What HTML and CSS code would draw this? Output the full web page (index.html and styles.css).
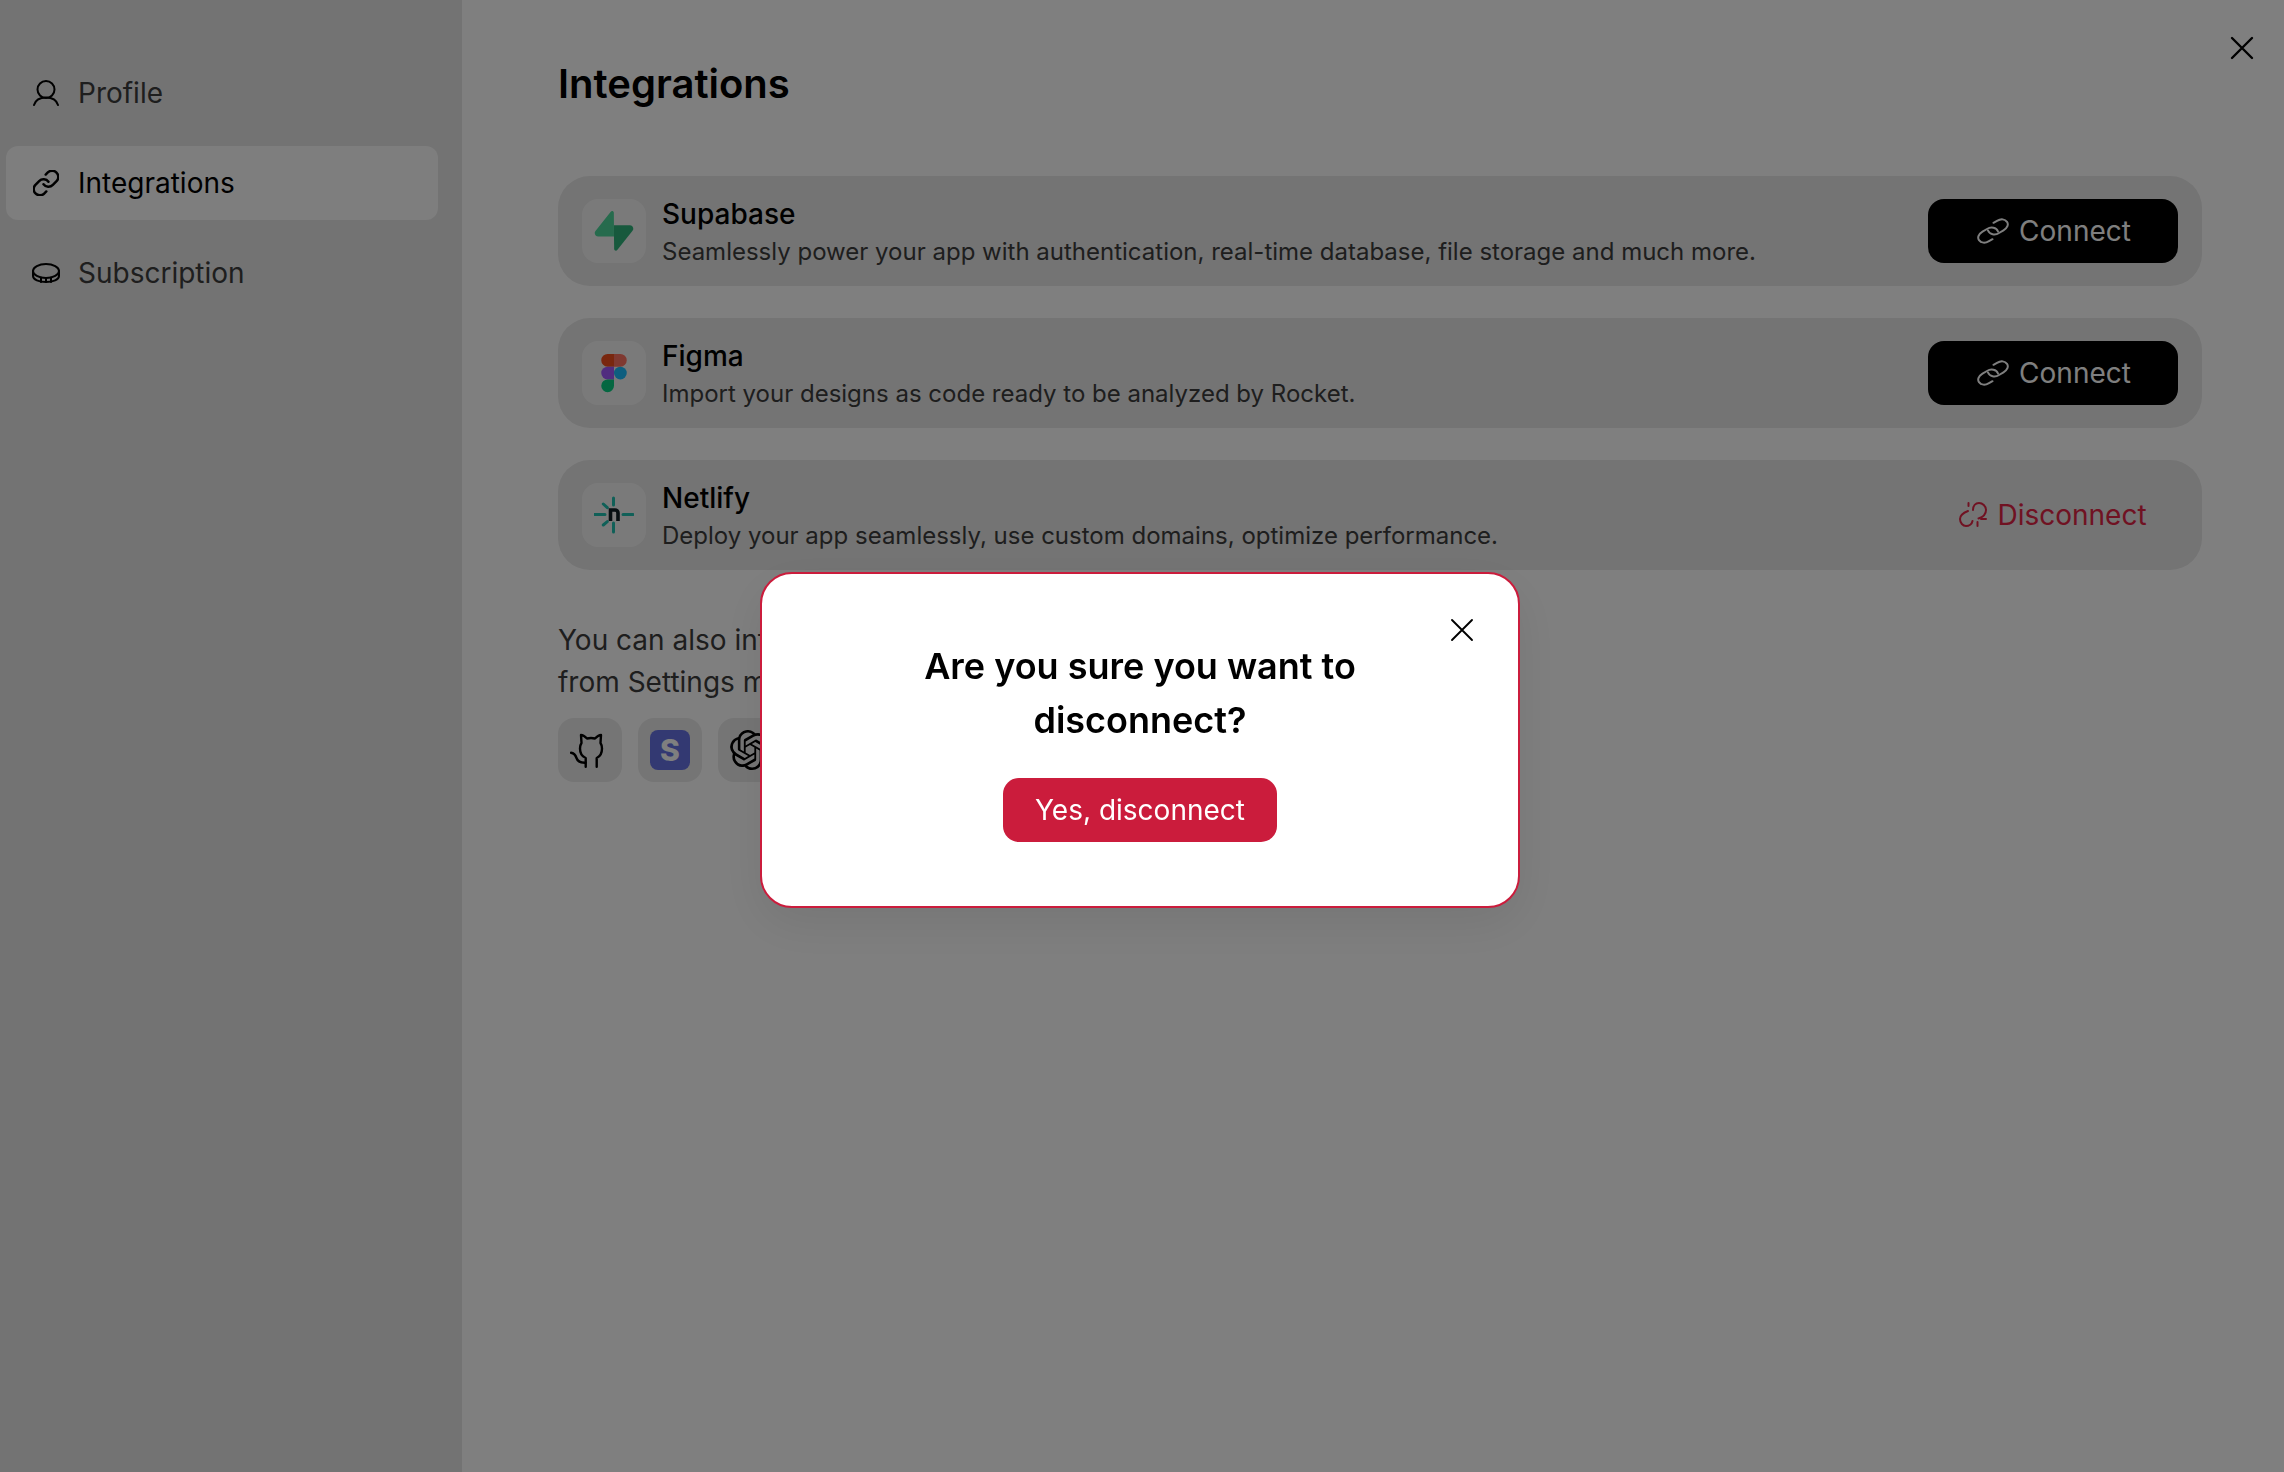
FILE: index.html
```html
<!DOCTYPE html>
<html lang="en">
<head>
<meta charset="utf-8">
<title>Integrations</title>
<link rel="stylesheet" href="styles.css">
</head>
<body>
<div class="app">
  <aside class="sidebar">
    <a class="nav-item">
      <svg class="nav-icon" viewBox="0 0 26 26"><circle cx="13" cy="9.500" r="8.500"/><path d="M1 25c1.500-5 6-7.500 12-7.500S23.500 20 25 25"/></svg>
      <span>Profile</span>
    </a>
    <a class="nav-item active">
      <svg class="nav-icon" viewBox="1.500 1.500 21 21"><path d="M10 13a5 5 0 0 0 7.540.540l3-3a5 5 0 0 0-7.070-7.070l-1.720 1.710"/><path d="M14 11a5 5 0 0 0-7.540-.540l-3 3a5 5 0 0 0 7.070 7.070l1.710-1.710"/></svg>
      <span>Integrations</span>
    </a>
    <a class="nav-item">
      <svg class="nav-icon nav-icon-wide" viewBox="0 0 28 20"><ellipse cx="14" cy="8" rx="13" ry="7"/><path d="M1 8v5c0 3.500 6 6 13 6s13-2.500 13-6V8"/><path d="M9 14.500V19M14 15v4M19 14.500V19"/></svg>
      <span>Subscription</span>
    </a>
  </aside>
  <main class="main">
    <button class="page-close" aria-label="Close">
      <svg class="x-icon" viewBox="0 0 24 24"><path d="M2 2l20 20M22 2 2 22"/></svg>
    </button>
    <h1 class="title">Integrations</h1>
    <section class="cards">
      <article class="card">
        <div class="logo-box">
          <svg class="logo" viewBox="0 0 109 113"><path class="supa-dark" d="M63.708 110.284c-2.860 3.601-8.658 1.628-8.727-2.970l-1.007-67.251h45.220c8.190 0 12.758 9.460 7.665 15.875l-43.151 54.346Z"/><path class="supa-light" d="M45.317 2.071c2.860-3.601 8.657-1.628 8.726 2.970l.442 67.251H9.831c-8.190 0-12.759-9.460-7.665-15.875L45.317 2.071Z"/></svg>
        </div>
        <div class="card-text">
          <h2 class="card-name">Supabase</h2>
          <p class="card-desc">Seamlessly power your app with authentication, real-time database, file storage and much more.</p>
        </div>
        <button class="btn-connect">
          <svg class="btn-icon" viewBox="0 0 32 28"><path d="M11 13.500C12.500 17.500 18 18.500 22 16l4.500-2.700C30.500 10.800 31.800 7.500 30 4.800 28 2 24 1.500 20 3.800l-3.500 2"/><path d="M21 14.500C19.500 10.500 14 9.500 10 12l-4.500 2.700C1.500 17.200.200 20.500 2 23.200 4 26 8 26.500 12 24.200l3.500-2"/></svg>
          <span>Connect</span>
        </button>
      </article>
      <article class="card">
        <div class="logo-box">
          <svg class="logo" viewBox="0 0 28 42"><path fill="#f24e1e" d="M14 1H7.300a6.700 6.700 0 0 0 0 13.400H14z"/><path fill="#ff7262" d="M14 1h6.700a6.700 6.700 0 0 1 0 13.400H14z"/><path fill="#a259ff" d="M14 14.400H7.300a6.700 6.700 0 0 0 0 13.400H14z"/><circle fill="#1abcfe" cx="20.700" cy="21.100" r="6.700"/><path fill="#0acf83" d="M7.300 27.800H14v6.700a6.700 6.700 0 1 1-6.700-6.700z"/></svg>
        </div>
        <div class="card-text">
          <h2 class="card-name">Figma</h2>
          <p class="card-desc">Import your designs as code ready to be analyzed by Rocket.</p>
        </div>
        <button class="btn-connect">
          <svg class="btn-icon" viewBox="0 0 32 28"><path d="M11 13.500C12.500 17.500 18 18.500 22 16l4.500-2.700C30.500 10.800 31.800 7.500 30 4.800 28 2 24 1.500 20 3.800l-3.500 2"/><path d="M21 14.500C19.500 10.500 14 9.500 10 12l-4.500 2.700C1.500 17.200.200 20.500 2 23.200 4 26 8 26.500 12 24.200l3.500-2"/></svg>
          <span>Connect</span>
        </button>
      </article>
      <article class="card">
        <div class="logo-box">
          <svg class="logo netlify" viewBox="0 0 40 40"><path d="M0 19.500h11M29 19.500h10M19.500 3v7M19.500 28v9M9.300 9l4 3.700M9.300 30l4-3.300"/><path class="n" d="M16.500 26V15h4.500a3 3 0 0 1 3 3v8"/></svg>
        </div>
        <div class="card-text">
          <h2 class="card-name">Netlify</h2>
          <p class="card-desc">Deploy your app seamlessly, use custom domains, optimize performance.</p>
        </div>
        <button class="btn-disconnect">
          <svg class="btn-icon-red" viewBox="0 0 28 26"><path d="M14 8c0-4 2.500-7 6-7s7 3 7 7c0 4-3 7-7.500 8.500"/><path d="M9 9C4 11 1 13.500 1 17c0 4 3 7 6 7s6-2 6.500-5"/><path d="M9.500 1v3M22 17h5M18.500 20v4"/></svg>
          <span>Disconnect</span>
        </button>
      </article>
    </section>
    <p class="note">You can also integrate GitHub, Stripe and OpenAI<br>from Settings menu.</p>
    <div class="extras">
      <div class="logo-box">
        <svg class="extra-logo" viewBox="0 0 40 40"><path d="M15.700 36.700V28C12 26.500 10 23 10 18.500c0-2.500.500-4 1.500-5.500L11 5c2 0 4 1.500 6 3.500 3-.700 5-.700 8 0 2-2 4-3.500 6-3.500l-.500 8c1 1.500 1.500 3 1.500 5.500 0 4.500-2 8-5.300 9.500v8.700"/><path d="M1 22.700c3 .300 4.500 2.300 5.500 5.300s3.500 5 9 4.800"/></svg>
      </div>
      <div class="logo-box">
        <span class="stripe">S</span>
      </div>
      <div class="logo-box">
        <svg class="openai-logo" viewBox="0 0 24 24"><path d="M22.282 9.821a5.985 5.985 0 0 0-.516-4.911 6.046 6.046 0 0 0-6.510-2.900A6.065 6.065 0 0 0 4.981 4.182a5.985 5.985 0 0 0-3.998 2.900 6.046 6.046 0 0 0 .743 7.097 5.980 5.980 0 0 0 .511 4.911 6.051 6.051 0 0 0 6.515 2.900A5.985 5.985 0 0 0 13.260 24a6.056 6.056 0 0 0 5.772-4.206 5.990 5.990 0 0 0 3.998-2.900 6.056 6.056 0 0 0-.748-7.073zm-9.022 12.608a4.476 4.476 0 0 1-2.876-1.041l.142-.080 4.778-2.758a.795.795 0 0 0 .393-.681v-6.737l2.020 1.169a.071.071 0 0 1 .038.052v5.583a4.504 4.504 0 0 1-4.495 4.494zm-9.661-4.125a4.471 4.471 0 0 1-.535-3.014l.142.085 4.783 2.758a.771.771 0 0 0 .781 0l5.843-3.368v2.332a.080.080 0 0 1-.033.062L9.740 19.950a4.499 4.499 0 0 1-6.141-1.646zM2.341 7.896a4.485 4.485 0 0 1 2.365-1.973V11.600a.766.766 0 0 0 .388.677l5.815 3.354-2.020 1.169a.076.076 0 0 1-.071 0l-4.830-2.787A4.504 4.504 0 0 1 2.340 7.872zm16.596 3.856L13.104 8.364 15.119 7.200a.076.076 0 0 1 .071 0l4.830 2.791a4.494 4.494 0 0 1-.676 8.104v-5.677a.790.790 0 0 0-.407-.667zm2.011-3.023l-.142-.085-4.774-2.782a.776.776 0 0 0-.785 0L9.409 9.230V6.897a.066.066 0 0 1 .028-.061l4.830-2.787a4.499 4.499 0 0 1 6.680 4.660zM8.307 12.863l-2.020-1.164a.080.080 0 0 1-.038-.057V6.074a4.499 4.499 0 0 1 7.376-3.454l-.142.081L8.704 5.459a.795.795 0 0 0-.393.681zm1.097-2.365l2.602-1.500 2.607 1.500v3l-2.597 1.500-2.607-1.500Z"/></svg>
      </div>
    </div>
  </main>
</div>
<div class="overlay">
  <div class="dialog">
    <button class="dialog-close" aria-label="Close">
      <svg class="x-icon thin" viewBox="0 0 24 24"><path d="M2 2l20 20M22 2 2 22"/></svg>
    </button>
    <h2 class="dialog-title">Are you sure you want to disconnect?</h2>
    <button class="btn-danger">Yes, disconnect</button>
  </div>
</div>
</body>
</html>
```
FILE: styles.css
```css
* { box-sizing: border-box; }
html, body { margin: 0; height: 100%; }
body { font-family: Inter, "Liberation Sans", sans-serif; background: #fff; color: #000; overflow: hidden; }
button { font: inherit; border: 0; background: none; padding: 0; cursor: pointer; }
h1, h2, p { margin: 0; }

.app { display: flex; height: 1472px; }

.sidebar { width: 462px; flex: none; background: #e6e6e6; padding: 56px 24px 0 6px; display: flex; flex-direction: column; gap: 16px; }
.nav-item { display: flex; align-items: center; gap: 19px; height: 74px; padding-left: 27px; border-radius: 12px; font-size: 28px; color: #3d3d3d; }
.nav-item.active { background: #fcfcfc; color: #000; }
.nav-icon { width: 26px; height: 26px; flex: none; fill: none; stroke: #000; stroke-width: 2; stroke-linecap: round; stroke-linejoin: round; }
.nav-icon-wide { width: 28px; height: 20px; margin: 0 -1px; }

.main { flex: 1; position: relative; padding: 60px 82px 0 96px; }
.page-close { position: absolute; top: 36px; right: 30px; width: 24px; height: 24px; display: flex; }
.x-icon { width: 100%; height: 100%; fill: none; stroke: #000; stroke-width: 2.400; stroke-linecap: round; }
.x-icon.thin { stroke-width: 1.900; }
.title { font-size: 40px; line-height: 48px; font-weight: 600; color: #000; }

.cards { display: flex; flex-direction: column; gap: 32px; margin-top: 68px; }
.card { height: 110px; display: flex; align-items: center; padding: 0 24px; background: #e8e8e8; border-radius: 32px; }
.logo-box { width: 64px; height: 64px; flex: none; display: flex; align-items: center; justify-content: center; background: #f5f5f5; border-radius: 16px; }
.logo { width: 40px; height: 40px; }
.supa-light { fill: #4cd69a; }
.supa-dark { fill: #2fb27a; }
.netlify { fill: none; stroke: #20c0b0; stroke-width: 3; stroke-linecap: round; }
.netlify .n { stroke: #0e1e25; stroke-width: 3.600; stroke-linecap: butt; }
.card-text { flex: 1; margin: 4px 0 0 16px; display: flex; flex-direction: column; gap: 2px; }
.card-name { font-size: 28px; line-height: 36px; font-weight: 500; color: #000; }
.card-desc { font-size: 24px; line-height: 36px; color: #3d3d3d; }

.btn-connect { width: 250px; height: 64px; flex: none; display: flex; align-items: center; justify-content: center; gap: 10px; padding-left: 2px; background: #000; color: #fff; border-radius: 16px; font-size: 28px; }
.btn-icon { width: 32px; height: 28px; fill: none; stroke: #fff; stroke-width: 2; stroke-linecap: round; stroke-linejoin: round; }
.btn-disconnect { width: 250px; height: 64px; flex: none; display: flex; align-items: center; justify-content: center; gap: 10px; color: #e12545; font-size: 28px; }
.btn-icon-red { width: 28px; height: 26px; fill: none; stroke: #e12545; stroke-width: 2; stroke-linecap: round; }

.note { margin-top: 49px; font-size: 28px; line-height: 42px; color: #3d3d3d; }
.extras { display: flex; gap: 16px; margin-top: 15px; }
.extra-logo { width: 40px; height: 40px; fill: none; stroke: #000; stroke-width: 2.400; stroke-linecap: round; stroke-linejoin: round; }
.openai-logo { width: 40px; height: 40px; fill: #000; }
.extras .logo-box { background: #ebebeb; }
.stripe { width: 40px; height: 40px; display: flex; align-items: center; justify-content: center; background: #6772e5; border-radius: 8px; color: #fff; font-size: 30px; font-weight: 800; }

.overlay { position: fixed; inset: 0; background: rgba(0,0,0,.5); }
.dialog { position: absolute; left: 760px; top: 572px; width: 760px; height: 336px; background: #fff; border: 2px solid #cb1c3c; border-radius: 32px; padding: 65px 0 0; display: flex; flex-direction: column; align-items: center; box-shadow: 0 16px 48px rgba(0,0,0,.08); }
.dialog-close { position: absolute; top: 44px; right: 44px; width: 24px; height: 24px; display: flex; }
.dialog-title { width: 480px; font-size: 36px; line-height: 54px; font-weight: 600; text-align: center; color: #000; }
.btn-danger { margin-top: 31px; width: 274px; height: 64px; background: #cb1c3c; color: #fff; border-radius: 16px; font-size: 28px; }
```
